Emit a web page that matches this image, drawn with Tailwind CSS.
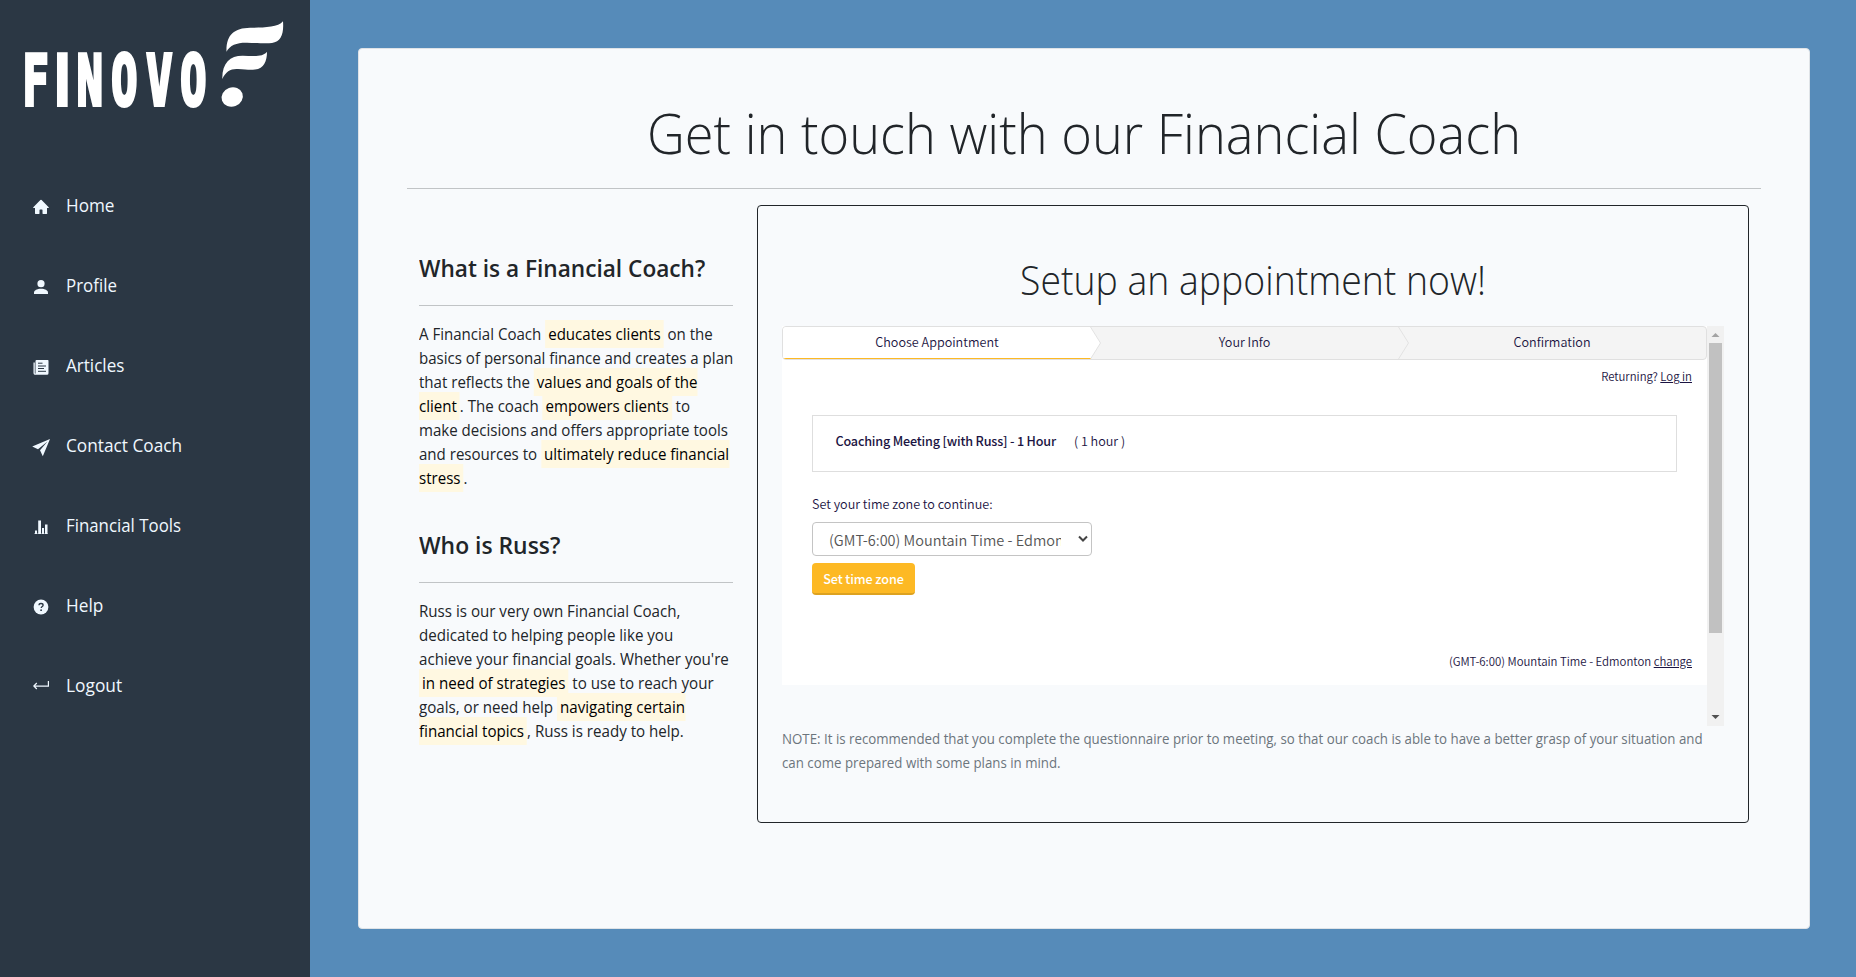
<!DOCTYPE html>
<html lang="en">
<head>
<meta charset="utf-8">
<title>Finovo - Contact Coach</title>
<script src="https://cdn.jsdelivr.net/npm/@tailwindcss/browser@4"></script>
</head>
<body class="flex h-[977px] w-[1856px] overflow-hidden bg-[#568bb9] font-['Open_Sans',sans-serif] text-[#212529]">
<aside class="h-full w-[310px] shrink-0 bg-[#2b3744] text-[#f0f8ff]">
  <svg class="block" width="310" height="165" viewBox="0 0 310 165" fill="#fff">
    <text transform="translate(0 105) scale(.62 1)" x="36.200 87.500 123.600 179.600 235.800 290.900" y="0" font-family="'DejaVu Sans Mono', monospace" font-weight="700" font-size="70" stroke="#fff" stroke-width="4">F<tspan font-family="'DejaVu Sans', sans-serif">I</tspan>NOVO</text>
    <path d="M283 21.3C278 28 262 27.5 250 27.7C234 28 226 35 226.5 51.7C230 45 237 42.5 247 42.7C258 43 266 43.5 272 43C281 41.5 284 34 283 21.3Z"/>
    <path d="M267 51.7C263 57 254 56 243 55.7C230 55.5 222 63 222.3 79C226 71 231 68.5 238 69C246 69.5 250 70 255 69.5C264 68.5 267 61 267 51.7Z"/>
    <ellipse cx="232.2" cy="97" rx="10.8" ry="9.6" transform="rotate(-20 232.2 97)"/>
  </svg>
  <nav class="flex flex-col text-[17.6px] leading-[80px]">
    <a class="flex h-20 items-center gap-[17px] pl-[33px]"><svg class="mt-1" width="16" height="16" viewBox="0 0 16 16" fill="currentColor"><path d="M6.5 14.5v-3.5c0-.25.25-.5.5-.5h2c.25 0 .5.25.5.5v3.5c0 .25.25.5.5.5h3.5c.3 0 .5-.2.5-.5V9h1.3c.5 0 .7-.5.4-.8L8.6.9a.9.9 0 0 0-1.2 0L.3 8.2c-.3.3-.1.8.4.8H2v5.500c0 .3.2.5.5.5H6c.3 0 .5-.2.5-.5z"/></svg><span class="origin-left scale-x-[.975]">Home</span></a>
    <a class="flex h-20 items-center gap-[17px] pl-[33px]"><svg class="mt-1" width="16" height="16" viewBox="0 0 16 16" fill="currentColor"><path d="M1 15v-1.500c0-2 3-3.700 7-3.700s7 1.700 7 3.700V15z"/><circle cx="8" cy="4.700" r="3.600"/></svg><span class="origin-left scale-x-[.96]">Profile</span></a>
    <a class="flex h-20 items-center gap-[17px] pl-[33px]"><svg class="mt-1" width="16" height="16" viewBox="0 0 16 16" fill="currentColor"><path d="M3.500 1h11.300a.7.700 0 0 1 .7.700v12.600a1.500 1.500 0 0 1-1.500 1.500H2.200A1.700 1.700 0 0 1 .5 14.300V3.500h1.300v10.800c0 .5.700.5.700 0V2a1 1 0 0 1 1-1z"/><path d="M5 4.200h4.500M5 7h8M5 9.500h6M5 12.300h8" stroke="#2b3744" stroke-width="1" fill="none"/></svg><span class="origin-left scale-x-[.97]">Articles</span></a>
    <a class="flex h-20 items-center gap-[17px] pl-[33px]"><svg class="mt-1 overflow-visible" width="16" height="16" viewBox="0 0 16 16" fill="currentColor"><path d="M17 0L-.8 7.600L5 10.200L14.500 2.600L7 11.300L9.800 17.200z"/></svg><span class="origin-left scale-x-[.98]">Contact Coach</span></a>
    <a class="flex h-20 items-center gap-[17px] pl-[33px]"><svg class="mt-1" width="16" height="16" viewBox="0 0 16 16" fill="currentColor"><path d="M2 11.500h2V15H2zM5.200 1.500H8V15H5.200zM9 9h2v6H9zM12 5.500h2.500V15H12z"/><path d="M1 14.200h14v.8H1z" opacity=".5"/></svg><span class="origin-left scale-x-[.957]">Financial Tools</span></a>
    <a class="flex h-20 items-center gap-[17px] pl-[33px]"><svg class="mt-1" width="16" height="16" viewBox="0 0 16 16" fill="currentColor"><circle cx="8" cy="8" r="7.400"/><path d="M6 6.300C6 4.900 7 4.500 8 4.500s2.100.6 2.100 1.700C10.100 7.400 8.200 7.500 8.200 9" fill="none" stroke="#2b3744" stroke-width="1.300"/><circle cx="8.100" cy="11.200" r=".9" fill="#2b3744"/></svg><span class="origin-left scale-x-[.98]">Help</span></a>
    <a class="flex h-20 items-center gap-[17px] pl-[33px]"><svg class="mt-1" width="16" height="16" viewBox="0 0 16 16" fill="none" stroke="currentColor" stroke-width="1.200"><path d="M3.800 4L.8 7l3 3M.8 7.200H15.400V2"/></svg><span class="origin-left scale-x-[.985]">Logout</span></a>
  </nav>
</aside>
<main class="pt-12 pl-12">
  <section class="h-[881px] w-[1452px] rounded border border-[#dfe3e7] bg-[#f8fafc] p-12">
    <h1 class="h-[91px] scale-x-[.935] pt-0.5 text-center text-[56px] leading-[67px] font-light whitespace-nowrap">Get in touch with our Financial Coach</h1>
    <hr class="border-t border-[#c1c4c6]">
    <div class="mt-4 flex">
      <div class="w-[350px] pt-12 pr-6 pl-3 text-base leading-6 whitespace-nowrap">
        <h2 class="origin-left scale-x-[.943] text-2xl leading-[29px] font-semibold">What is a Financial Coach?</h2>
        <hr class="mt-[23px] border-t border-[#c1c4c6]">
        <p class="mt-4 origin-left scale-x-[.941]">A Financial Coach <mark class="bg-[#fff8e1] p-[3.2px] text-black">educates clients</mark> on the<br>basics of personal finance and creates a plan<br>that reflects the <mark class="bg-[#fff8e1] p-[3.2px] text-black">values and goals of the<br>client</mark>. The coach <mark class="bg-[#fff8e1] p-[3.2px] text-black">empowers clients</mark> to<br>make decisions and offers appropriate tools<br>and resources to <mark class="bg-[#fff8e1] p-[3.2px] text-black">ultimately reduce financial<br>stress</mark>.</p>
        <h2 class="mt-10 origin-left scale-x-[.953] text-2xl leading-[29px] font-semibold">Who is Russ?</h2>
        <hr class="mt-[23px] border-t border-[#c1c4c6]">
        <p class="mt-4 origin-left scale-x-[.945]">Russ is our very own Financial Coach,<br>dedicated to helping people like you<br>achieve your financial goals. Whether you're<br><mark class="bg-[#fff8e1] p-[3.2px] text-black">in need of strategies</mark> to use to reach your<br>goals, or need help <mark class="bg-[#fff8e1] p-[3.2px] text-black">navigating certain<br>financial topics</mark>, Russ is ready to help.</p>
      </div>
      <div class="h-[618px] w-[992px] rounded border border-[#212529] px-6 pt-12">
        <h2 class="h-[72px] scale-x-[.934] pt-[1.500px] text-center text-[40px] leading-[48px] font-light whitespace-nowrap">Setup an appointment now!</h2>
        <div class="flex h-[400px] w-[942px] font-['Noto_Sans_CJK_JP',sans-serif] text-[#1b1442]">
          <div class="h-[359px] w-[925px] bg-white text-[12.6px] font-[350]">
            <div class="relative flex h-[34px] overflow-hidden rounded border border-[#e0e0e0] bg-[#f4f4f4] text-center leading-[30px]">
              <svg class="absolute inset-0" width="923" height="32" viewBox="0 0 923 32" fill="none"><path d="M0 0H307.500L317.500 16L307.500 32H0Z" fill="#fff"/><path d="M307.500 0L317.500 16L307.500 32M615.500 0L625.500 16L615.500 32" stroke="#e2e2e2"/><path d="M0 31.500H307.500" stroke="#fdb924"/></svg>
              <span class="relative w-[308px]">Choose Appointment</span><span class="relative w-[307px]">Your Info</span><span class="relative w-[308px]">Confirmation</span>
            </div>
            <p class="h-[55px] pt-1.5 pr-[15px] text-right text-[11.4px] leading-5">Returning? <a class="underline">Log in</a></p>
            <div class="ml-[30px] flex h-[57px] w-[865px] gap-[18px] border border-[#dedede] pt-[15px] pl-[22.5px] leading-5"><b class="font-medium tracking-[-0.18px]">Coaching Meeting [with Russ] - 1 Hour</b><span>( 1 hour )</span></div>
            <p class="mt-[22px] ml-[30px] leading-5">Set your time zone to continue:</p>
            <div class="mt-2 ml-[30px] flex h-[34px] w-[280px] items-center rounded border border-[#c4c4c4] pl-4 text-[14.5px] leading-[34px] text-[#555]"><span class="w-[232px] overflow-hidden pt-px whitespace-nowrap">(GMT-6:00) Mountain Time - Edmonton</span><svg class="ml-4" width="12" height="8" viewBox="0 0 12 8" fill="none" stroke="#444" stroke-width="2"><path d="M2 1.500L6 5.500L10 1.500"/></svg></div>
            <button class="mt-[7px] ml-[30px] block h-8 w-[103px] rounded border-b-2 border-[#dda220] bg-[#fdb924] text-center leading-[29px] font-medium tracking-[-0.1px] text-white">Set time zone</button>
            <p class="mt-[56px] pr-[15px] text-right text-[11.400px] leading-5">(GMT-6:00) Mountain Time - Edmonton <a class="underline">change</a></p>
          </div>
          <div class="flex h-[400px] w-[17px] flex-col items-center bg-[#f1f1f1]">
            <svg width="17" height="17" viewBox="0 0 17 17" fill="#a3a3a3"><path d="M4.500 11L8.500 7L12.500 11Z"/></svg>
            <div class="h-[290px] w-[13px] bg-[#c1c1c1]"></div>
            <svg class="mt-auto" width="17" height="17" viewBox="0 0 17 17" fill="#505050"><path d="M4.500 6L8.500 10L12.500 6Z"/></svg>
          </div>
        </div>
        <p class="origin-left scale-x-[.949] pt-px text-sm leading-6 whitespace-nowrap text-[#6c757d]">NOTE: It is recommended that you complete the questionnaire prior to meeting, so that our coach is able to have a better grasp of your situation and<br>can come prepared with some plans in mind.</p>
      </div>
    </div>
  </section>
</main>
</body>
</html>
